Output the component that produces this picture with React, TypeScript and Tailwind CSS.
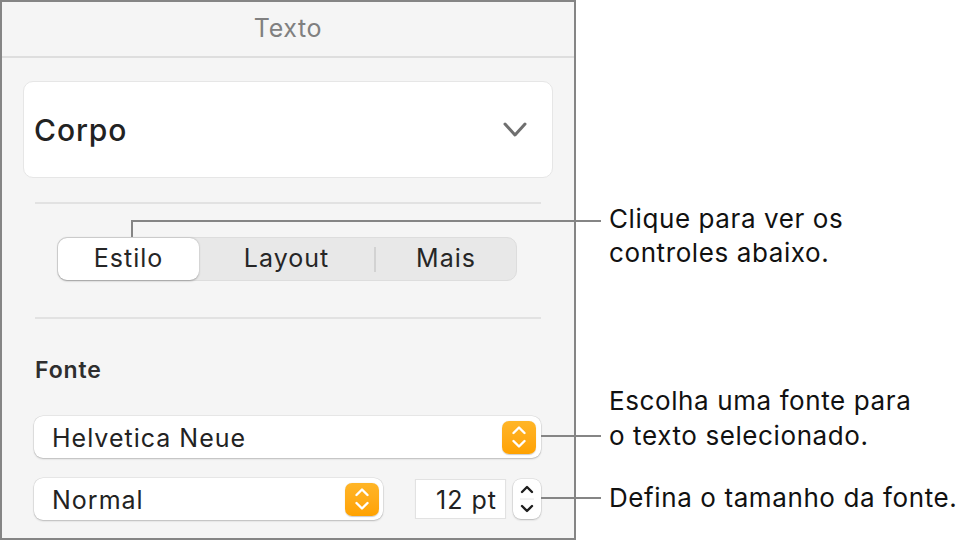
import React from 'react';

const font = { fontFamily: 'Inter, "Noto Sans", sans-serif' };

function UpDown({ color = '#ffffff', w = 14 }: { color?: string; w?: number }) {
  return (
    <svg width={w} height="24" viewBox="0 0 14 24" fill="none">
      <polyline points="1.5,8 7,2.5 12.5,8" stroke={color} strokeWidth="2.4" strokeLinecap="round" strokeLinejoin="round" />
      <polyline points="1.5,16 7,21.5 12.5,16" stroke={color} strokeWidth="2.4" strokeLinecap="round" strokeLinejoin="round" />
    </svg>
  );
}

function OrangeButton() {
  return (
    <div className="w-[34px] h-[33px] rounded-[7px] bg-gradient-to-b from-[#ffb526] to-[#ffa200] flex items-center justify-center shadow-[0_0.5px_1px_rgba(0,0,0,0.2)]">
      <UpDown />
    </div>
  );
}

export default function App() {
  return (
    <div className="relative w-[966px] h-[540px] bg-white flex text-[#1e1e1e]" style={font}>
      {/* panel */}
      <div className="w-[576px] h-[540px] shrink-0 border-2 border-[#858585] bg-[#f5f5f5] flex flex-col">
        <div className="h-[56px] border-b-2 border-[#dedede] flex items-center justify-center text-[25px] tracking-[0.6px] text-[#808080]">
          Texto
        </div>

        <div className="px-[21px] pt-[23px] flex flex-col">
          {/* paragraph style */}
          <div className="h-[97px] rounded-[10px] bg-white border border-[#e6e6e6] flex items-center justify-between pl-[10px] pr-[25px]">
            <span className="pt-[2px] text-[30px] tracking-[0.9px] font-medium text-[#222]">Corpo</span>
            <svg width="24" height="16" viewBox="0 0 24 16" fill="none">
              <polyline points="2,2 12,13 22,2" stroke="#6f6f6f" strokeWidth="3" strokeLinecap="round" strokeLinejoin="round" />
            </svg>
          </div>

          <div className="mx-[12px] mt-[24px] h-[2px] bg-[#e2e2e2]" />

          {/* segmented */}
          <div className="ml-[34px] mt-[33px] w-[460px] h-[44px] rounded-[10px] bg-[#e8e8e8] border border-[#dddddd] flex items-center text-[25px] tracking-[1px] text-[#262626]">
            <div className="w-[141px] h-[42px] rounded-[9px] bg-white shadow-[0_0.5px_2px_rgba(0,0,0,0.3)] flex items-center justify-center">
              Estilo
            </div>
            <div className="w-[175px] flex items-center justify-center">Layout</div>
            <div className="w-[2px] h-[25px] bg-[#d2d2d2]" />
            <div className="flex-1 flex items-center justify-center">Mais</div>
          </div>

          <div className="mx-[12px] mt-[36px] h-[2px] bg-[#e2e2e2]" />

          <div className="ml-[12px] mt-[38px] text-[23px] tracking-[0.9px] leading-[26px] font-semibold text-[#2e2e2e]">Fonte</div>

          {/* font family */}
          <div className="ml-[11px] mt-[33px] w-[507px] h-[42px] rounded-[9px] bg-white shadow-[0_0_0_0.5px_rgba(0,0,0,0.1),0_1px_2px_rgba(0,0,0,0.2)] flex items-center justify-between pl-[18px] pr-[5px]">
            <span className="pt-[3px] text-[25px] tracking-[1px] text-[#222]">Helvetica Neue</span>
            <OrangeButton />
          </div>

          {/* typeface + size */}
          <div className="ml-[11px] mt-[20px] flex items-center">
            <div className="w-[349px] h-[42px] rounded-[9px] bg-white shadow-[0_0_0_0.5px_rgba(0,0,0,0.1),0_1px_2px_rgba(0,0,0,0.2)] flex items-center justify-between pl-[18px] pr-[4px]">
              <span className="pt-[4px] text-[25px] tracking-[1px] text-[#222]">Normal</span>
              <OrangeButton />
            </div>
            <div className="ml-[32px] w-[91px] h-[40px] bg-white border border-[#e2e2e2] shadow-[0_-0.5px_1px_rgba(0,0,0,0.1)] flex items-center justify-end pr-[8px] pt-[3px] text-[25px] tracking-[1px] text-[#222]">
              12 pt
            </div>
            <div className="ml-[7px] w-[28px] h-[40px] rounded-[8px] bg-white shadow-[0_0_0_0.5px_rgba(0,0,0,0.12),0_1px_2px_rgba(0,0,0,0.2)] flex flex-col items-center justify-center">
              <svg width="14" height="34" viewBox="0 0 14 34" fill="none">
                <polyline points="2,10 7,5 12,10" stroke="#1e1e1e" strokeWidth="2.4" strokeLinecap="round" strokeLinejoin="round" />
                <line x1="0" y1="17" x2="14" y2="17" stroke="#e6e6e6" strokeWidth="1" />
                <polyline points="2,24 7,29 12,24" stroke="#1e1e1e" strokeWidth="2.4" strokeLinecap="round" strokeLinejoin="round" />
              </svg>
            </div>
          </div>
        </div>
      </div>

      {/* callout texts */}
      <div className="ml-[33px] flex flex-col text-[26px] tracking-[0.6px] leading-[34px] text-[#111]">
        <div className="mt-[202px]">
          Clique para ver os
          <br />
          controles abaixo.
        </div>
        <div className="mt-[113px] leading-[35px]">
          Escolha uma fonte para
          <br />
          o texto selecionado.
        </div>
        <div className="mt-[28px]">Defina o tamanho da fonte.</div>
      </div>

      {/* leader lines */}
      <div className="absolute left-[131px] top-[220px] w-[2px] h-[17px] bg-[#858585]" />
      <div className="absolute left-[131px] top-[220px] w-[470px] h-[2px] bg-[#858585]" />
      <div className="absolute left-[541px] top-[435px] w-[60px] h-[2px] bg-[#858585]" />
      <div className="absolute left-[541px] top-[497px] w-[60px] h-[2px] bg-[#858585]" />
    </div>
  );
}
